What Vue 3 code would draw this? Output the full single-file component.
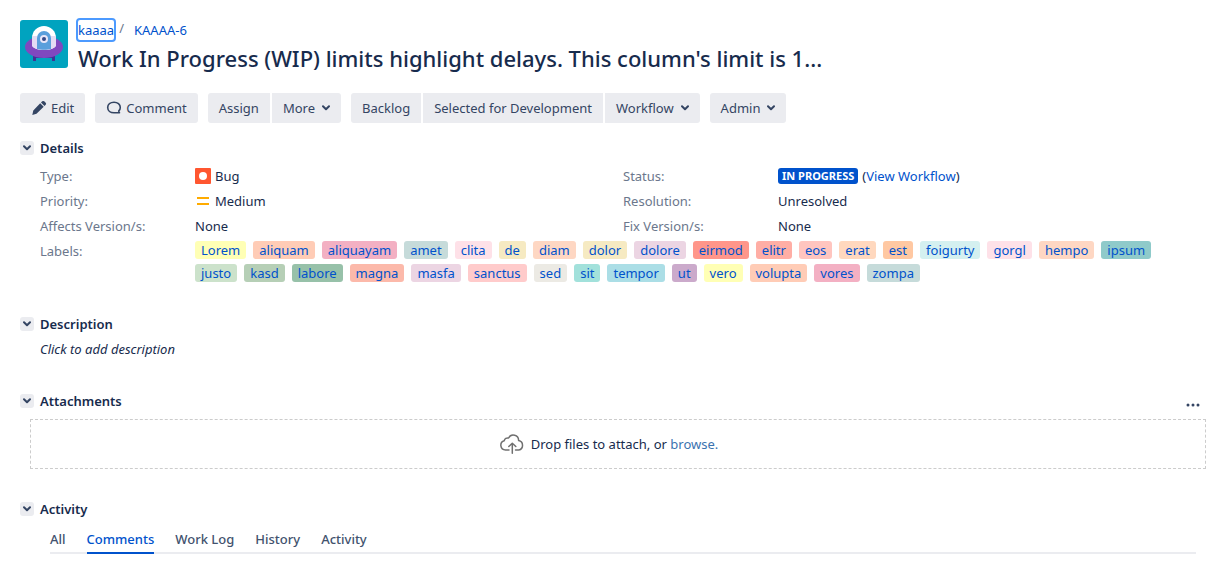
<script setup>
import { ref } from 'vue'

const labels = [
  ['Lorem', '#ffffb5'], ['aliquam', '#ffccb6'], ['aliquayam', '#f3b0c3'], ['amet', '#c6dbda'],
  ['clita', '#fee1e8'], ['de', '#f6eac2'], ['diam', '#fed7c3'], ['dolor', '#f6eac2'],
  ['dolore', '#ecd5e3'], ['eirmod', '#ff968a'], ['elitr', '#ffaea5'], ['eos', '#ffc5bf'],
  ['erat', '#ffd8be'], ['est', '#ffc8a2'], ['foigurty', '#d4f0f0'], ['gorgl', '#fee1e8'],
  ['hempo', '#fed7c3'], ['ipsum', '#8fcaca'], ['justo', '#cce2cb'], ['kasd', '#b6cfb6'],
  ['labore', '#97c1a9'], ['magna', '#fcb9aa'], ['masfa', '#ecd5e3'], ['sanctus', '#ffcbcb'],
  ['sed', '#eceae4'], ['sit', '#a2e1db'], ['tempor', '#abdee6'], ['ut', '#cbaacb'],
  ['vero', '#ffffb5'], ['volupta', '#ffccb6'], ['vores', '#f3b0c3'], ['zompa', '#c6dbda'],
]

const groups = [
  [{ text: 'Edit', icon: 'edit' }],
  [{ text: 'Comment', icon: 'comment' }],
  [{ text: 'Assign' }, { text: 'More', menu: true }],
  [{ text: 'Backlog' }, { text: 'Selected for Development' }, { text: 'Workflow', menu: true }],
  [{ text: 'Admin', menu: true }],
]

const tabs = ['All', 'Comments', 'Work Log', 'History', 'Activity']
const activeTab = ref('Comments')
</script>

<template>
  <main class="issue">
    <header class="header">
      <svg class="avatar" viewBox="0 0 48 48" aria-hidden="true">
        <rect width="48" height="48" rx="3" fill="#00a3bf" />
        <path d="M13 34h22v7h-3v-3H16v3h-3z" fill="#403294" />
        <ellipse cx="24" cy="27" rx="19" ry="11" fill="#8048bf" />
        <path d="M12 18a12 12 0 0 1 24 0v7c0 2-4 5-12 5s-12-3-12-5z" fill="#fff" />
        <path d="M12 16v9c0 2 4 5 12 5s12-3 12-5v-9z" fill="#e4dcf4" />
        <path d="M17 18a7 7 0 0 1 14 0v11c-4 1-10 1-14 0z" fill="#5a9fdc" />
        <circle cx="24" cy="19" r="4" fill="#e9e6f8" />
        <circle cx="24" cy="19" r="2" fill="#344a88" />
      </svg>
      <div class="heading">
        <nav class="crumbs" aria-label="Breadcrumb">
          <a href="#" class="focused">kaaaa</a><span class="slash">/</span><a href="#">KAAAA-6</a>
        </nav>
        <h1>Work In Progress (WIP) limits highlight delays. This column's limit is 1...</h1>
      </div>
    </header>

    <div class="toolbar">
      <div v-for="(group, i) in groups" :key="i" class="group">
        <button v-for="b in group" :key="b.text" type="button">
          <svg v-if="b.icon === 'edit'" class="icon" viewBox="0 0 16 16" aria-hidden="true">
            <path d="M10 2.500 11.200 1.300q1-.8 2 0l1.500 1.500q.9 1 0 2L13.500 6zM9.200 3.300l3.500 3.500-7.200 7L1.300 15l1-4.500z" fill="#344563" />
          </svg>
          <svg v-if="b.icon === 'comment'" class="icon" viewBox="0 0 16 16" aria-hidden="true">
            <path d="M8 2.200c-3.600 0-6.300 2.200-6.300 5.300s2.700 5.300 6.300 5.300h5.500c-.6-.5-.8-1.200-.7-1.900.9-.9 1.500-2 1.500-3.400 0-3.100-2.700-5.300-6.300-5.300z" fill="none" stroke="#344563" stroke-width="1.600" stroke-linejoin="round" />
          </svg>
          <span>{{ b.text }}</span>
          <svg v-if="b.menu" class="caret" viewBox="0 0 8 6" aria-hidden="true">
            <path d="m1 1.200 3 3 3-3" fill="none" stroke="#344563" stroke-width="2" stroke-linecap="round" stroke-linejoin="round" />
          </svg>
        </button>
      </div>
    </div>

    <section class="details">
      <div class="title">
        <button type="button" class="toggle" aria-label="Toggle Details">
          <svg class="caret" viewBox="0 0 8 6" aria-hidden="true"><path d="m1 1.200 3 3 3-3" fill="none" stroke="#344563" stroke-width="2" stroke-linecap="round" stroke-linejoin="round" /></svg>
        </button>
        <h2>Details</h2>
      </div>
      <dl class="fields">
        <dt>Type:</dt>
        <dd>
          <svg class="type" viewBox="0 0 16 16" aria-hidden="true"><rect width="16" height="16" rx="1" fill="#ff5630" /><circle cx="8" cy="8" r="4" fill="#fff" /></svg>Bug
        </dd>
        <dt>Status:</dt>
        <dd><span class="status">IN PROGRESS</span><span>(<a href="#">View Workflow</a>)</span></dd>
        <dt>Priority:</dt>
        <dd>
          <svg class="type" viewBox="0 0 16 16" aria-hidden="true"><path d="M2 4h12v2H2zM2 10h12v2H2z" fill="#ffab00" /></svg>Medium
        </dd>
        <dt>Resolution:</dt>
        <dd>Unresolved</dd>
        <dt>Affects Version/s:</dt>
        <dd>None</dd>
        <dt>Fix Version/s:</dt>
        <dd>None</dd>
        <dt>Labels:</dt>
        <dd class="labels">
          <a v-for="[name, color] in labels" :key="name" href="#" :style="{ background: color }">{{ name }}</a>
        </dd>
      </dl>
    </section>

    <section class="description">
      <div class="title">
        <button type="button" class="toggle" aria-label="Toggle Description">
          <svg class="caret" viewBox="0 0 8 6" aria-hidden="true"><path d="m1 1.200 3 3 3-3" fill="none" stroke="#344563" stroke-width="2" stroke-linecap="round" stroke-linejoin="round" /></svg>
        </button>
        <h2>Description</h2>
      </div>
      <p class="placeholder">Click to add description</p>
    </section>

    <section class="attachments">
      <div class="title">
        <button type="button" class="toggle" aria-label="Toggle Attachments">
          <svg class="caret" viewBox="0 0 8 6" aria-hidden="true"><path d="m1 1.200 3 3 3-3" fill="none" stroke="#344563" stroke-width="2" stroke-linecap="round" stroke-linejoin="round" /></svg>
        </button>
        <h2>Attachments</h2>
        <button type="button" class="more" aria-label="Attachment options">
          <svg viewBox="0 0 14 4" aria-hidden="true"><g fill="#344563"><circle cx="2" cy="2" r="1.500" /><circle cx="7" cy="2" r="1.500" /><circle cx="12" cy="2" r="1.500" /></g></svg>
        </button>
      </div>
      <div class="drop">
        <svg class="cloud" viewBox="0 0 24 20" aria-hidden="true">
          <g fill="none" stroke="#707070" stroke-width="1.500" stroke-linecap="round" stroke-linejoin="round">
            <path d="M9 16H5.500a4.700 4.700 0 0 1-1.300-9.200A3.600 3.600 0 0 1 8.600 4a5.300 5.300 0 0 1 10 2.600 4.800 4.800 0 0 1 .2 9.400H15.500" />
            <path d="M12.300 19.200V9.500M8.800 12.500l3.500-3.300 3.500 3.300" />
          </g>
        </svg>
        <span>Drop files to attach, or <a href="#">browse.</a></span>
      </div>
    </section>

    <section class="activity">
      <div class="title">
        <button type="button" class="toggle" aria-label="Toggle Activity">
          <svg class="caret" viewBox="0 0 8 6" aria-hidden="true"><path d="m1 1.200 3 3 3-3" fill="none" stroke="#344563" stroke-width="2" stroke-linecap="round" stroke-linejoin="round" /></svg>
        </button>
        <h2>Activity</h2>
      </div>
      <div class="tabs" role="tablist">
        <button
          v-for="tab in tabs"
          :key="tab"
          type="button"
          role="tab"
          :aria-selected="tab === activeTab"
          :class="{ active: tab === activeTab }"
          @click="activeTab = tab"
        >{{ tab }}</button>
      </div>
    </section>
  </main>
</template>

<style>
body {
  background: #fff;
}
</style>

<style scoped>
.issue {
  padding: 20px 19px 18px 20px;
  font: 13px/20px "Segoe UI", "Noto Sans", "Open Sans", sans-serif;
  color: #172b4d;
}
h1, h2, dl, dd, p {
  margin: 0;
}
a {
  color: #0052cc;
  text-decoration: none;
}
button {
  font: inherit;
  color: #344563;
  border: 0;
  padding: 0;
  background: none;
}
svg {
  display: block;
  flex: none;
}
.header {
  display: flex;
  gap: 8px;
}
.avatar {
  width: 48px;
  height: 48px;
}
.heading {
  min-width: 0;
}
.crumbs {
  display: flex;
  height: 20px;
  padding-left: 2px;
}
.focused {
  border-radius: 2px;
  outline: 2px solid #4c9aff;
}
.slash {
  margin: -2px 10px 0 5px;
  color: #6b778c;
}
h1 {
  padding-left: 2px;
  font-size: 22px;
  line-height: 36px;
  font-weight: 500;
}
.toolbar {
  display: flex;
  flex-wrap: wrap;
  gap: 10px;
  margin-top: 17px;
}
.group {
  display: flex;
  gap: 2px;
  border-radius: 3px;
  overflow: hidden;
}
.group button {
  display: flex;
  align-items: center;
  height: 30px;
  padding: 0 11px;
  background: #ebecf0;
}
.icon {
  width: 16px;
  height: 16px;
  margin-right: 4px;
}
.caret {
  width: 8px;
  height: 6px;
}
.group .caret {
  margin-left: 7px;
}
.title {
  display: flex;
  align-items: center;
  height: 20px;
}
h2 {
  font-size: 13px;
  line-height: 20px;
  font-weight: 600;
}
.toggle {
  display: grid;
  place-items: center;
  width: 14px;
  height: 14px;
  margin-right: 6px;
  background: #ebecf0;
  border-radius: 3px;
}
.details {
  margin-top: 15px;
}
.fields {
  display: grid;
  grid-template-columns: 155px 1fr 155px 1fr;
  row-gap: 5px;
  margin: 8px 0 0 20px;
}
dt {
  color: #6b778c;
}
dd {
  display: flex;
  align-items: center;
  gap: 4px;
}
.type {
  width: 16px;
  height: 16px;
}
.status {
  padding: 0 4px;
  border-radius: 3px;
  background: #0052cc;
  color: #fff;
  font-size: 11px;
  line-height: 16px;
  font-weight: 700;
}
dd.labels {
  grid-column: 2 / -1;
  flex-wrap: wrap;
  gap: 5px 7px;
  padding-right: 50px;
}
.labels a {
  padding: 0 6px;
  border-radius: 3px;
  line-height: 18px;
}
.description {
  margin-top: 32px;
}
.placeholder {
  margin: 5px 0 0 20px;
  font-style: italic;
}
.attachments {
  margin-top: 32px;
}
.more {
  margin: 8px 6px 0 auto;
}
.more svg {
  width: 14px;
  height: 4px;
}
.drop {
  display: flex;
  align-items: center;
  justify-content: center;
  gap: 7px;
  min-height: 48px;
  margin: 8px 0 0 10px;
  padding-right: 18px;
  border: 1px dashed #ccc;
}
.drop a {
  color: #3b73af;
}
.cloud {
  width: 24px;
  height: 20px;
}
.activity {
  margin-top: 30px;
}
.tabs {
  display: flex;
  gap: 21px;
  margin: 10px 10px 0 30px;
  border-bottom: 2px solid #ebecf0;
}
.tabs button {
  height: 25px;
  margin-bottom: -2px;
  padding-bottom: 3px;
  border-bottom: 2px solid transparent;
  color: #42526e;
  font-weight: 500;
}
.tabs .active {
  color: #0052cc;
  border-color: #0052cc;
}
</style>
